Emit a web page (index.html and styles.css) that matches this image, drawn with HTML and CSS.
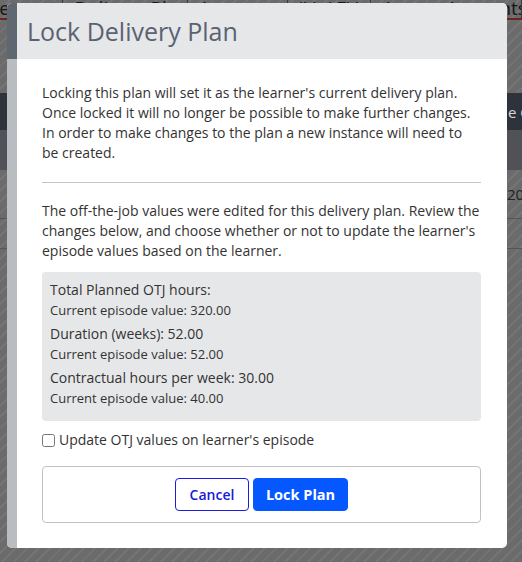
FILE: index.html
```html
<!DOCTYPE html>
<html>
<head>
<meta charset="utf-8">
<link rel="stylesheet" href="styles.css">
</head>
<body>
<div class="page">
  <div class="tabs">
    <span class="tab first">Requirements</span>
    <span class="tab">Delivery Plan</span>
    <span class="tab">Assessors</span>
    <span class="tab">IVs/ EVs</span>
    <span class="tab">Access Accounts</span>
  </div>
  <div class="redline"></div>
  <div class="spacer1"></div>
  <div class="band-dark"><span class="band-text">e Created</span></div>
  <div class="band-mid"></div>
  <div class="row row1"><span class="row-text">2024</span></div>
  <div class="row row2"></div>
</div>

<div class="modal">
  <div class="modal-header">
    <h1 class="modal-title">Lock Delivery Plan</h1>
  </div>
  <div class="modal-body">
    <p class="intro">Locking this plan will set it as the learner's current delivery plan. Once locked it will no longer be possible to make further changes. In order to make changes to the plan a new instance will need to be created.</p>
    <hr class="divider">
    <p class="review">The off-the-job values were edited for this delivery plan. Review the changes below, and choose whether or not to update the learner's episode values based on the learner.</p>
    <div class="values">
      <div class="group">
        <div class="label">Total Planned OTJ hours:</div>
        <div class="sub">Current episode value: 320.00</div>
      </div>
      <div class="group">
        <div class="label">Duration (weeks): 52.00</div>
        <div class="sub">Current episode value: 52.00</div>
      </div>
      <div class="group">
        <div class="label">Contractual hours per week: 30.00</div>
        <div class="sub">Current episode value: 40.00</div>
      </div>
    </div>
    <label class="check-row"><input type="checkbox" class="check"><span>Update OTJ values on learner's episode</span></label>
    <div class="actions">
      <button class="btn btn-cancel">Cancel</button>
      <button class="btn btn-lock">Lock Plan</button>
    </div>
  </div>
</div>
</body>
</html>
```

FILE: styles.css
```css
html, body {
  margin: 0;
  padding: 0;
}
body {
  width: 522px;
  height: 562px;
  overflow: hidden;
  position: relative;
  font-family: "Open Sans", "Noto Sans", sans-serif;
  background: repeating-linear-gradient(135deg, #6b6b6b 0 6px, #747474 6px 8px);
}
.page {
  display: flex;
  flex-direction: column;
}
.tabs {
  display: flex;
  height: 18px;
  overflow: hidden;
  align-items: flex-end;
  font-size: 19px;
  color: #161616;
  line-height: 16px;
  white-space: nowrap;
  margin-left: -70px;
}
.tab {
  padding: 0 11px;
  border-right: 1px solid #3a3a3a;
  height: 18px;
  overflow: hidden;
}
.redline {
  height: 2px;
  background: #6e2222;
}
.spacer1 {
  height: 73px;
}
.band-dark {
  height: 37px;
  background: #2d323b;
  display: flex;
  align-items: center;
  color: #d8d8d8;
  font-size: 15px;
  overflow: hidden;
  white-space: nowrap;
  padding-left: 508px;
}
.band-mid {
  height: 40px;
  background: #505257;
}
.row {
  display: flex;
  align-items: center;
  border-bottom: 1px solid #555;
  color: #222;
  font-size: 15px;
  overflow: hidden;
  white-space: nowrap;
  padding-left: 507px;
}
.row1 { height: 48px; }
.row2 { height: 29px; }

.modal {
  position: absolute;
  top: 3px;
  left: 7px;
  width: 500px;
  height: 545px;
  border-radius: 5px;
  overflow: hidden;
  display: flex;
  flex-direction: column;
  background: #fff;
}
.modal-header {
  height: 56px;
  background: #e6e7e9;
  border-left: 10px solid #5f6771;
  padding-left: 10px;
  display: flex;
  align-items: center;
}
.modal-title {
  margin: 0;
  font-size: 25px;
  font-weight: 400;
  color: #5a6272;
  line-height: 32px;
}
.modal-body {
  flex: 1;
  border-left: 10px solid #b9bdc2;
  padding: 24px 26px 0 25px;
  font-size: 14px;
  line-height: 20px;
  color: #333;
}
.intro {
  margin: 0;
}
.divider {
  border: 0;
  border-top: 1px solid #c4c4c4;
  margin: 19px 0 18px;
}
.review {
  margin: 0 0 11px;
}
.values {
  background: #e6e7e9;
  border-radius: 4px;
  padding: 8px 8px 13px;
  display: flex;
  flex-direction: column;
  gap: 4px;
}
.label {
  font-size: 14px;
  line-height: 20px;
}
.sub {
  font-size: 13px;
  line-height: 20px;
}
.check-row {
  display: flex;
  align-items: center;
  margin-top: 9px;
  height: 20px;
}
.check {
  margin: 0 4px 0 0;
  width: 13px;
  height: 13px;
}
.actions {
  margin-top: 16px;
  border: 1px solid #c2c2c2;
  border-radius: 4px;
  height: 55px;
  display: flex;
  justify-content: center;
  align-items: center;
  gap: 4px;
}
.btn {
  font-family: "Open Sans", "Noto Sans", sans-serif;
  font-size: 14px;
  font-weight: 600;
  height: 33px;
  border-radius: 4px;
  padding: 0 8px;
  cursor: pointer;
}
.btn-cancel {
  background: #fff;
  border: 1px solid #1c1cdc;
  color: #1a1ad8;
  width: 74px;
}
.btn-lock {
  background: #0558ff;
  border: 1px solid #0558ff;
  color: #fff;
  width: 95px;
  font-size: 14.5px;
  font-weight: 700;
}
```
